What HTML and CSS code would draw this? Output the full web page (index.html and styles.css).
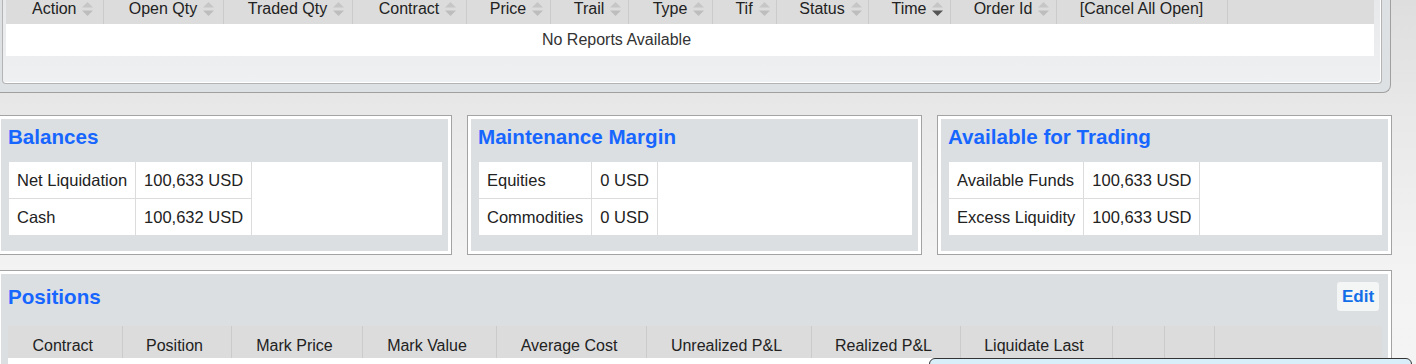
FILE: index.html
```html
<!DOCTYPE html>
<html>
<head>
    <title>Account</title>
    <link rel="stylesheet" href="styles.css">
</head>
<body>
    <div class="orders">
        <div class="orders-box">
            <table class="grid orders-table">
                <colgroup>
                    <col style="width:97px"><col style="width:120px"><col style="width:129px"><col style="width:114px">
                    <col style="width:84px"><col style="width:78px"><col style="width:84px"><col style="width:64px">
                    <col style="width:92px"><col style="width:82px"><col style="width:106px"><col style="width:171px">
                    <col>
                </colgroup>
                <thead>
                    <tr>
                        <th>Action<svg class="sort" viewBox="0 0 11 14"><path class="up" d="M0 5.5L5.5 0L11 5.5Z"/><path class="down" d="M0 8.5H11L5.5 14Z"/></svg></th>
                        <th>Open Qty<svg class="sort" viewBox="0 0 11 14"><path class="up" d="M0 5.5L5.5 0L11 5.5Z"/><path class="down" d="M0 8.5H11L5.5 14Z"/></svg></th>
                        <th>Traded Qty<svg class="sort" viewBox="0 0 11 14"><path class="up" d="M0 5.5L5.5 0L11 5.5Z"/><path class="down" d="M0 8.5H11L5.5 14Z"/></svg></th>
                        <th>Contract<svg class="sort" viewBox="0 0 11 14"><path class="up" d="M0 5.5L5.5 0L11 5.5Z"/><path class="down" d="M0 8.5H11L5.5 14Z"/></svg></th>
                        <th>Price<svg class="sort" viewBox="0 0 11 14"><path class="up" d="M0 5.5L5.5 0L11 5.5Z"/><path class="down" d="M0 8.5H11L5.5 14Z"/></svg></th>
                        <th>Trail<svg class="sort" viewBox="0 0 11 14"><path class="up" d="M0 5.5L5.5 0L11 5.5Z"/><path class="down" d="M0 8.5H11L5.5 14Z"/></svg></th>
                        <th>Type<svg class="sort" viewBox="0 0 11 14"><path class="up" d="M0 5.5L5.5 0L11 5.5Z"/><path class="down" d="M0 8.5H11L5.5 14Z"/></svg></th>
                        <th>Tif<svg class="sort" viewBox="0 0 11 14"><path class="up" d="M0 5.5L5.5 0L11 5.5Z"/><path class="down" d="M0 8.5H11L5.5 14Z"/></svg></th>
                        <th>Status<svg class="sort" viewBox="0 0 11 14"><path class="up" d="M0 5.5L5.5 0L11 5.5Z"/><path class="down" d="M0 8.5H11L5.5 14Z"/></svg></th>
                        <th>Time<svg class="sort desc" viewBox="0 0 11 14"><path class="up" d="M0 5.5L5.5 0L11 5.5Z"/><path class="down" d="M0 8.5H11L5.5 14Z"/></svg></th>
                        <th>Order Id<svg class="sort" viewBox="0 0 11 14"><path class="up" d="M0 5.5L5.5 0L11 5.5Z"/><path class="down" d="M0 8.5H11L5.5 14Z"/></svg></th>
                        <th>[Cancel All Open]</th>
                        <th class="filler"></th>
                    </tr>
                </thead>
                <tbody>
                    <tr>
                        <td colspan="12" class="empty">No Reports Available</td>
                        <td></td>
                    </tr>
                </tbody>
            </table>
        </div>
    </div>

    <div class="panel-row">
        <div class="panel">
            <div class="panel-body">
                <h2 class="panel-title">Balances</h2>
                <div class="kv-wrap">
                    <table class="kv">
                        <tr><td>Net Liquidation</td><td class="num">100,633 USD</td></tr>
                        <tr><td>Cash</td><td class="num">100,632 USD</td></tr>
                    </table>
                </div>
            </div>
        </div>
        <div class="panel">
            <div class="panel-body">
                <h2 class="panel-title">Maintenance Margin</h2>
                <div class="kv-wrap">
                    <table class="kv">
                        <tr><td>Equities</td><td class="num">0 USD</td></tr>
                        <tr><td>Commodities</td><td class="num">0 USD</td></tr>
                    </table>
                </div>
            </div>
        </div>
        <div class="panel">
            <div class="panel-body">
                <h2 class="panel-title">Available for Trading</h2>
                <div class="kv-wrap">
                    <table class="kv">
                        <tr><td>Available Funds</td><td class="num">100,633 USD</td></tr>
                        <tr><td>Excess Liquidity</td><td class="num">100,633 USD</td></tr>
                    </table>
                </div>
            </div>
        </div>
    </div>

    <div class="panel positions">
        <div class="panel-body">
            <div class="panel-head">
                <h2 class="panel-title">Positions</h2>
                <button class="edit-btn">Edit</button>
            </div>
            <table class="grid pos-table">
                <colgroup>
                    <col style="width:114px"><col style="width:109px"><col style="width:131px"><col style="width:134px">
                    <col style="width:150px"><col style="width:165px"><col style="width:149px"><col style="width:152px">
                    <col style="width:52px"><col style="width:50px"><col>
                </colgroup>
                <thead>
                    <tr>
                        <th>Contract</th>
                        <th>Position</th>
                        <th>Mark Price</th>
                        <th>Mark Value</th>
                        <th>Average Cost</th>
                        <th>Unrealized P&amp;L</th>
                        <th>Realized P&amp;L</th>
                        <th>Liquidate Last</th>
                        <th></th>
                        <th></th>
                        <th class="filler"></th>
                    </tr>
                </thead>
                <tbody>
                    <tr><td colspan="11" class="blank"></td></tr>
                </tbody>
            </table>
        </div>
    </div>

    <div class="tip"></div>
</body>
</html>
```

FILE: styles.css
```css
html, body {
    margin: 0;
    height: 100%;
    overflow: hidden;
}

body {
    font-family: "Liberation Sans", Arial, sans-serif;
    font-size: 16px;
    color: #222;
    background: linear-gradient(to bottom, #dedede 0, #e8e8e8 110px, #f3f3f3 270px, #f4f4f4 100%);
}

/* orders block, scrolled partly out of view */
.orders {
    margin: -6px 25px 0 -8px;
    border: 1px solid #a0a0a0;
    border-top: none;
    border-radius: 0 0 8px 8px;
    background: #dde1e4;
    padding: 0 8px 8px 9px;
}

.orders-box {
    border: 1px solid #b4b4b4;
    border-top: none;
    border-radius: 0 0 4px 4px;
    background: linear-gradient(to bottom, #e6e8ea, #eef0f1);
    box-shadow: inset -1px -1px 0 #fff;
    padding: 0 7px 27px 3px;
}

.grid {
    width: 100%;
    border-collapse: collapse;
    table-layout: fixed;
}

.grid th {
    background: #dcdcdc;
    font-weight: normal;
    color: #222;
    text-align: center;
    white-space: nowrap;
    line-height: 18px;
    border-right: 1px solid #cbcbcb;
}

.grid th.filler {
    border-right: none;
}

.orders-table th {
    padding: 6px 4px;
}

.orders-table td {
    background: #fff;
    padding: 7px 0;
    line-height: 18px;
}

.orders-table td.empty {
    text-align: center;
    color: #333;
}

.sort {
    width: 11px;
    height: 14px;
    margin-left: 6px;
    margin-right: -17px;
    vertical-align: -2px;
}

.sort .up {
    fill: #c6c6c6;
}

.sort .down {
    fill: #bdbdbd;
}

.sort.desc .down {
    fill: #555;
}

/* summary panels */
.panel-row {
    display: flex;
    gap: 15px;
    margin: 22px 24px 0 -3px;
}

.panel {
    flex: 1;
    border: 1px solid #a3a3a3;
    background: #fff;
    padding: 3px;
}

.panel-body {
    background: #dbdfe2;
    padding: 0 6px 16px 7px;
    height: 100%;
    box-sizing: border-box;
}

.panel-title {
    margin: 0;
    padding: 6px 0 14px;
    font-size: 20.6px;
    line-height: 23px;
    font-weight: bold;
    color: #1766ff;
}

.kv-wrap {
    margin-left: 1px;
    background: #fff;
}

.kv {
    border-collapse: collapse;
    font-size: 16.5px;
}

.kv td {
    padding: 9px 8px;
    line-height: 18px;
    border-right: 1px solid #dcdcdc;
    white-space: nowrap;
}

.kv tr:first-child td {
    border-bottom: 1px solid #dcdcdc;
}

.kv td.num {
    text-align: right;
}

/* positions */
.positions {
    margin: 15px 24px 0 -3px;
}

.positions .panel-body {
    padding-bottom: 0;
}

.panel-head {
    display: flex;
    align-items: center;
    justify-content: space-between;
    padding: 8px 3px 15px 0;
}

.panel-head .panel-title {
    padding: 0;
}

.edit-btn {
    font-family: "Liberation Sans", Arial, sans-serif;
    font-size: 17px;
    font-weight: bold;
    color: #136fe8;
    background: #f4f5f5;
    border: none;
    border-radius: 3px;
    padding: 0 4px;
    height: 29px;
    width: 42px;
}

.pos-table th {
    padding: 11px 6px 3px 2px;
}

.pos-table td.blank {
    background: #fff;
    height: 30px;
    padding: 0;
}

.tip {
    position: absolute;
    left: 929px;
    top: 358px;
    width: 481px;
    height: 30px;
    border: 1px solid #333;
    border-radius: 6px 6px 0 0;
    background: #d8eff9;
}
```
